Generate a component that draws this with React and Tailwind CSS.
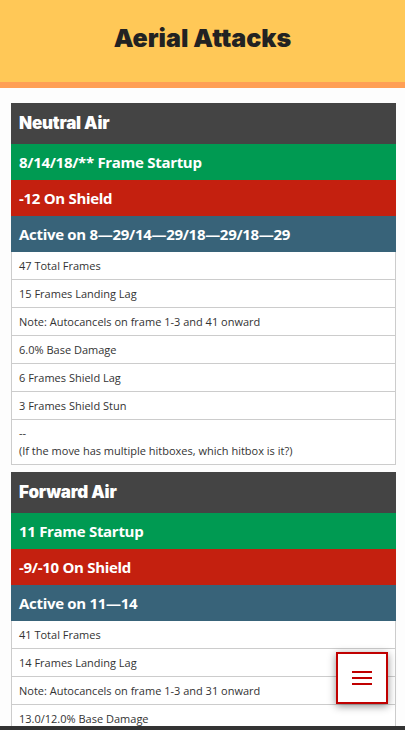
import React from 'react';

const moves = [
  {
    name: 'Neutral Air',
    startup: '8/14/18/** Frame Startup',
    shield: '-12 On Shield',
    active: 'Active on 8—29/14—29/18—29/18—29',
    rows: [
      '47 Total Frames',
      '15 Frames Landing Lag',
      'Note: Autocancels on frame 1-3 and 41 onward',
      '6.0% Base Damage',
      '6 Frames Shield Lag',
      '3 Frames Shield Stun',
    ],
    hitbox: true,
  },
  {
    name: 'Forward Air',
    startup: '11 Frame Startup',
    shield: '-9/-10 On Shield',
    active: 'Active on 11—14',
    rows: [
      '41 Total Frames',
      '14 Frames Landing Lag',
      'Note: Autocancels on frame 1-3 and 31 onward',
      '13.0/12.0% Base Damage',
      '6 Frames Shield Lag',
      '4 Frames Shield Stun',
    ],
    hitbox: true,
  },
];

const heading = { fontFamily: 'Inter, "DejaVu Sans", sans-serif' };
const body = { fontFamily: '"Open Sans", "Noto Sans", sans-serif' };

const MoveCard = ({ move }) => (
  <div className="mb-[7px]">
    <div className="h-[41px] bg-[#444444] px-[8px] flex items-center">
      <h2 className="text-[17px] font-black text-white tracking-[-0.2px]" style={heading}>{move.name}</h2>
    </div>
    <div className="h-[36px] bg-[#009a52] px-[8px] flex items-center text-white text-[15px] font-bold tracking-[-0.3px]" style={body}>{move.startup}</div>
    <div className="h-[36px] bg-[#c4200f] px-[8px] flex items-center text-white text-[15px] font-bold tracking-[-0.3px]" style={body}>{move.shield}</div>
    <div className="h-[36px] bg-[#386379] px-[8px] flex items-center text-white text-[15px] font-bold tracking-[-0.3px]" style={body}>{move.active}</div>
    <div className="border-x border-[#cccccc] bg-white text-[#333333] text-[11px]" style={body}>
      {move.rows.map((r) => (
        <div key={r} className="px-[7px] py-[4px] leading-[19px] border-b border-[#cccccc]">{r}</div>
      ))}
      {move.hitbox && (
        <div className="px-[7px] py-[4px] leading-[18px] border-b border-[#cccccc]">
          --<br />(If the move has multiple hitboxes, which hitbox is it?)
        </div>
      )}
    </div>
  </div>
);

export default function App() {
  return (
    <div className="min-h-screen bg-[#fdfdfd]">
      {/* Header */}
      <header className="h-[88px] bg-[#ffc857] border-b-[6px] border-[#ff9f55] flex items-center justify-center pb-[5px]">
        <h1 className="text-[25px] font-black text-[#222222] tracking-[0px]" style={heading}>Aerial Attacks</h1>
      </header>

      <main className="px-[11px] pt-[15px] pr-[9px]">
        {moves.map((m) => (
          <MoveCard key={m.name} move={m} />
        ))}
      </main>

      {/* Floating menu button */}
      <button className="fixed right-[17px] bottom-[26px] w-[52px] h-[52px] bg-white border-2 border-[#c00000] shadow-[0_2px_8px_rgba(0,0,0,0.45)] flex flex-col items-center justify-center gap-[4px]">
        <span className="block w-[20px] h-[2px] bg-[#c00000]" />
        <span className="block w-[20px] h-[2px] bg-[#c00000]" />
        <span className="block w-[20px] h-[2px] bg-[#c00000]" />
      </button>

      <div className="fixed bottom-0 left-0 right-0 h-[4px] bg-[#333333]" />
    </div>
  );
}
